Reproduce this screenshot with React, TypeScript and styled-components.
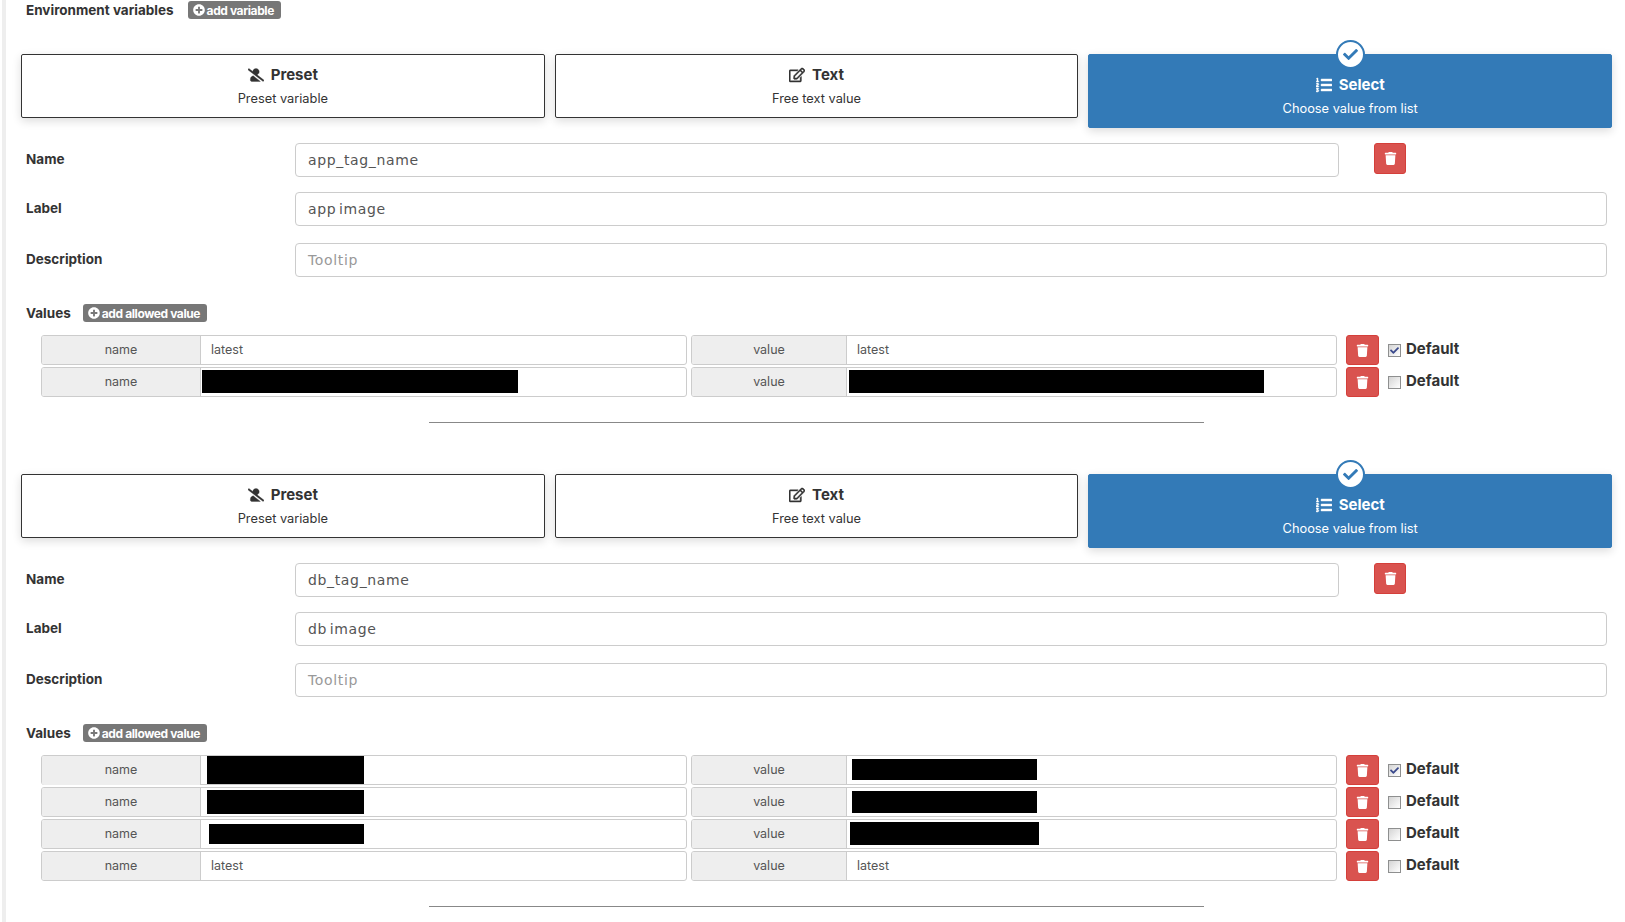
import React from 'react';
import styled, { createGlobalStyle } from 'styled-components';
import { FaCheck, FaListOl, FaPlusCircle, FaRegEdit, FaTrash, FaUserSlash } from 'react-icons/fa';

const GlobalStyle = createGlobalStyle`
    html, body {
        margin: 0;
        height: 922px;
        overflow: hidden;
        background: #fff;
        font-family: Inter, "Liberation Sans", sans-serif;
        color: #333;
    }
`

const Page = styled.div`
    height: 922px;
    margin-left: 2px;
    padding: 0 13px 0 15px;
    border-left: 4px solid #eee;
    box-sizing: border-box;
`

const Heading = styled.div`
    display: flex;
    align-items: center;
    gap: 14px;
    height: 20px;
    margin: 0 0 34px 5px;
`

const Title = styled.span`
    font-size: 13.5px;
    font-weight: 700;
    color: #333;
`

const AddBadge = styled.span`
    display: inline-flex;
    align-items: center;
    gap: 2px;
    height: 18px;
    padding: 0 7px 0 5px;
    border-radius: 3px;
    background: #777;
    color: #fff;
    font-size: 12px;
    font-weight: 700;
    letter-spacing: -0.4px;
`

const Section = styled.section`
    display: flex;
    flex-direction: column;
`

const OptionGrid = styled.div`
    display: grid;
    grid-template-columns: repeat(3, 1fr);
    gap: 10px;
    align-items: start;
    margin-bottom: 15px;
`

const Option = styled.div<{ $selected?: boolean }>`
    position: relative;
    display: flex;
    flex-direction: column;
    align-items: center;
    gap: 5px;
    height: ${(p) => (p.$selected ? '74px' : '64px')};
    padding-top: ${(p) => (p.$selected ? '20px' : '10px')};
    box-sizing: border-box;
    border-radius: 2px;
    border: 1px solid ${(p) => (p.$selected ? '#337ab7' : '#333')};
    background: ${(p) => (p.$selected ? '#337ab7' : '#fff')};
    color: ${(p) => (p.$selected ? '#fff' : '#333')};
    box-shadow: 0 3px 10px rgba(0, 0, 0, 0.14);
`

const OptionTitle = styled.div`
    display: flex;
    align-items: center;
    gap: 7px;
    font-size: 15px;
    line-height: 20px;
    font-weight: 700;

    svg {
        font-size: 16px;
        stroke: currentColor;
        stroke-width: 14px;
    }
`

const OptionText = styled.div`
    font-size: 12.8px;
    line-height: 18px;
`

const CheckMark = styled.span`
    position: absolute;
    top: -15px;
    left: 50%;
    display: flex;
    align-items: center;
    justify-content: center;
    width: 29px;
    height: 29px;
    margin-left: -14.5px;
    box-sizing: border-box;
    border: 2px solid #337ab7;
    border-radius: 50%;
    background: #fff;
    color: #337ab7;
    font-size: 15px;
`

const FormRow = styled.div<{ $gap: number }>`
    display: grid;
    grid-template-columns: 269px 1fr;
    align-items: center;
    margin-bottom: ${(p) => p.$gap}px;
    padding-left: 5px;
    padding-right: 5px;
`

const FieldLabel = styled.label`
    padding-bottom: 2px;
    font-size: 13.5px;
    font-weight: 700;
    color: #333;
`

const NameCell = styled.div`
    display: flex;
    align-items: flex-start;
    gap: 35px;
    padding-right: 201px;
`

const TextField = styled.div<{ $placeholder?: boolean }>`
    flex: 1;
    display: flex;
    align-items: center;
    height: 34px;
    padding: 0 12px;
    box-sizing: border-box;
    border: 1px solid #ccc;
    border-radius: 4px;
    font-family: "DejaVu Sans", sans-serif;
    font-size: 14px;
    letter-spacing: 0.65px;
    word-spacing: -2.5px;
    white-space: pre;
    color: ${(p) => (p.$placeholder ? '#999' : '#555')};
`

const DangerButton = styled.button<{ $width: number; $height: number }>`
    display: flex;
    align-items: center;
    justify-content: center;
    flex: none;
    width: ${(p) => p.$width}px;
    height: ${(p) => p.$height}px;
    padding: 0;
    border: 1px solid #d43f3a;
    border-radius: 3px;
    background: #d9534f;
    color: #fff;
    font-size: 13px;
`

const ValuesHeading = styled.div`
    display: flex;
    align-items: center;
    gap: 12px;
    height: 18px;
    margin: 27px 0 13px 5px;
`

const ValueRows = styled.div`
    display: flex;
    flex-direction: column;
    gap: 2px;
    margin-left: 20px;
`

const ValueRow = styled.div`
    display: flex;
    align-items: center;
    height: 30px;
`

const InputGroup = styled.div<{ $width: number; $addon: number; $gap: number }>`
    display: grid;
    grid-template-columns: ${(p) => p.$addon}px 1fr;
    flex: none;
    width: ${(p) => p.$width}px;
    height: 30px;
    margin-right: ${(p) => p.$gap}px;
    box-sizing: border-box;
    border: 1px solid #ccc;
    border-radius: 3px;
    font-size: 12.5px;
    color: #555;
`

const Addon = styled.span`
    display: flex;
    align-items: center;
    justify-content: center;
    padding-bottom: 2px;
    box-sizing: border-box;
    background: #eee;
    border-right: 1px solid #ccc;
    border-radius: 2px 0 0 2px;
`

const GroupValue = styled.span`
    display: flex;
    align-items: center;
    padding: 0 0 1px 10px;
`

const Redacted = styled.span<{ $offset: number; $width: number; $height: number }>`
    flex: none;
    width: ${(p) => p.$width}px;
    height: ${(p) => p.$height}px;
    margin-left: ${(p) => p.$offset}px;
    background: #000;
`

const DefaultLabel = styled.label`
    display: flex;
    align-items: center;
    gap: 5px;
    margin: 0 0 4px 9px;
    font-size: 15px;
    font-weight: 700;
    color: #333;
`

const CheckBox = styled.span`
    display: flex;
    align-items: center;
    justify-content: center;
    width: 13px;
    height: 13px;
    margin-top: 5px;
    box-sizing: border-box;
    border: 1px solid #8e8f8f;
    background: linear-gradient(135deg, #d4d4d4, #fff);
    color: #3b4a8c;
    font-size: 9px;
`

const Divider = styled.hr`
    width: 775px;
    height: 1px;
    margin: 25px 0 51px 408px;
    border: 0;
    background: #888;
`

interface ValueEntry {
    name: string | { offset: number; width: number; height: number };
    value: string | { offset: number; width: number; height: number };
    isDefault?: boolean;
}

interface VariableEntry {
    name: string;
    label: string;
    values: ValueEntry[];
}

const VARIABLES: VariableEntry[] = [
    {
        name: 'app_tag_name',
        label: 'app image',
        values: [
            { name: 'latest', value: 'latest', isDefault: true },
            {
                name: { offset: -9, width: 316, height: 23 },
                value: { offset: -8, width: 415, height: 23 },
            },
        ],
    },
    {
        name: 'db_tag_name',
        label: 'db image',
        values: [
            {
                name: { offset: -4, width: 157, height: 28 },
                value: { offset: -5, width: 185, height: 21 },
                isDefault: true,
            },
            {
                name: { offset: -4, width: 157, height: 24 },
                value: { offset: -5, width: 185, height: 22 },
            },
            {
                name: { offset: -2, width: 155, height: 20 },
                value: { offset: -7, width: 189, height: 23 },
            },
            { name: 'latest', value: 'latest' },
        ],
    },
];

function renderValue(content: ValueEntry['name']) {
    if (typeof content === 'string') {
        return content;
    }
    return <Redacted $offset={content.offset} $width={content.width} $height={content.height} />;
}

function Options() {
    return (
        <OptionGrid>
            <Option>
                <OptionTitle><FaUserSlash /> Preset</OptionTitle>
                <OptionText>Preset variable</OptionText>
            </Option>
            <Option>
                <OptionTitle><FaRegEdit /> Text</OptionTitle>
                <OptionText>Free text value</OptionText>
            </Option>
            <Option $selected>
                <CheckMark><FaCheck /></CheckMark>
                <OptionTitle><FaListOl /> Select</OptionTitle>
                <OptionText>Choose value from list</OptionText>
            </Option>
        </OptionGrid>
    );
}

function Variable({ variable }: { variable: VariableEntry }) {
    return (
        <Section>
            <Options />
            <FormRow $gap={15}>
                <FieldLabel>Name</FieldLabel>
                <NameCell>
                    <TextField>{variable.name}</TextField>
                    <DangerButton $width={32} $height={31}><FaTrash /></DangerButton>
                </NameCell>
            </FormRow>
            <FormRow $gap={17}>
                <FieldLabel>Label</FieldLabel>
                <TextField>{variable.label}</TextField>
            </FormRow>
            <FormRow $gap={0}>
                <FieldLabel>Description</FieldLabel>
                <TextField $placeholder>Tooltip</TextField>
            </FormRow>
            <ValuesHeading>
                <Title>Values</Title>
                <AddBadge><FaPlusCircle /> add allowed value</AddBadge>
            </ValuesHeading>
            <ValueRows>
                {variable.values.map((entry, index) => (
                    <ValueRow key={index}>
                        <InputGroup $width={646} $addon={159} $gap={4}>
                            <Addon>name</Addon>
                            <GroupValue>{renderValue(entry.name)}</GroupValue>
                        </InputGroup>
                        <InputGroup $width={646} $addon={155} $gap={9}>
                            <Addon>value</Addon>
                            <GroupValue>{renderValue(entry.value)}</GroupValue>
                        </InputGroup>
                        <DangerButton $width={33} $height={30}><FaTrash /></DangerButton>
                        <DefaultLabel>
                            <CheckBox>{entry.isDefault ? <FaCheck /> : null}</CheckBox>
                            Default
                        </DefaultLabel>
                    </ValueRow>
                ))}
            </ValueRows>
            <Divider />
        </Section>
    );
}

export default function App() {
    return (
        <Page>
            <GlobalStyle />
            <Heading>
                <Title>Environment variables</Title>
                <AddBadge><FaPlusCircle /> add variable</AddBadge>
            </Heading>
            {VARIABLES.map((variable) => (
                <Variable key={variable.name} variable={variable} />
            ))}
        </Page>
    );
}
